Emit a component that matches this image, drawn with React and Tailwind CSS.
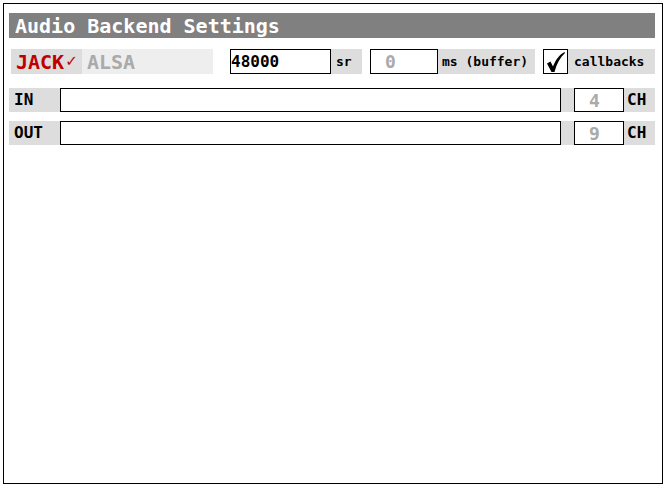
const mono = { fontFamily: "'DejaVu Sans Mono', monospace" };

function ChannelRow({ label, count }) {
  return (
    <div className="flex h-[24px] bg-[#dddddd] font-bold text-[16px] text-black" style={mono}>
      <div className="flex w-[51px] items-center pl-[5px]">{label}</div>
      <div className="h-full w-[501px] border border-black bg-white" />
      <div className="w-[13px]" />
      <div className="flex h-full w-[50px] items-center border border-black bg-white pl-[14px] text-[18px] text-[#aaaaaa]">
        {count}
      </div>
      <div className="flex flex-1 items-center pl-[3px]">CH</div>
    </div>
  );
}

export default function App() {
  return (
    <div className="h-[488px] w-[667px] bg-white pl-[3px] pt-[3px]" style={mono}>
      <div className="flex h-[481px] w-[660px] flex-col border border-black pl-[5px] pr-[7px] pt-[9px]">
        <div className="flex h-[25px] items-center bg-[#808080] pl-[6px] text-[20px] font-bold text-white">
          Audio Backend Settings
        </div>

        <div className="ml-[2px] mt-[11px] flex h-[25px] text-[13px] font-bold">
          <div className="flex w-[71px] items-center bg-[#dddddd] pl-[5px] text-[20px] text-[#c00000]">
            JACK<span className="ml-[1px] text-[15px]" style={{ fontFamily: "'DejaVu Sans', sans-serif" }}>✓</span>
          </div>
          <div className="flex w-[131px] items-center bg-[#eeeeee] pl-[5px] text-[20px] text-[#aaaaaa]">ALSA</div>
          <div className="ml-[17px] flex w-[101px] items-center border border-black bg-white text-[16px]">48000</div>
          <div className="flex w-[31px] items-center bg-[#dddddd] pl-[5px]">sr</div>
          <div className="ml-[8px] flex w-[68px] items-center border border-black bg-white pl-[14px] text-[18px] text-[#aaaaaa]">
            0
          </div>
          <div className="flex w-[97px] items-center bg-[#dddddd] pl-[4px]">ms (buffer)</div>
          <div className="ml-[8px] flex w-[25px] items-center justify-center border border-black bg-white">
            <svg width="20" height="22" viewBox="0 0 20 22">
              <path d="M1 12.5 L4.5 10.5 L7 15.5 C9.5 9 13 4 18.5 1 L19 2 C14 6.5 10.5 13 8.5 21 L5.5 21 Z" fill="black" />
            </svg>
          </div>
          <div className="flex flex-1 items-center bg-[#dddddd] pl-[6px]">callbacks</div>
        </div>

        <div className="mt-[14px] flex flex-col gap-[9px]">
          <ChannelRow label="IN" count="4" />
          <ChannelRow label="OUT" count="9" />
        </div>
      </div>
    </div>
  );
}
